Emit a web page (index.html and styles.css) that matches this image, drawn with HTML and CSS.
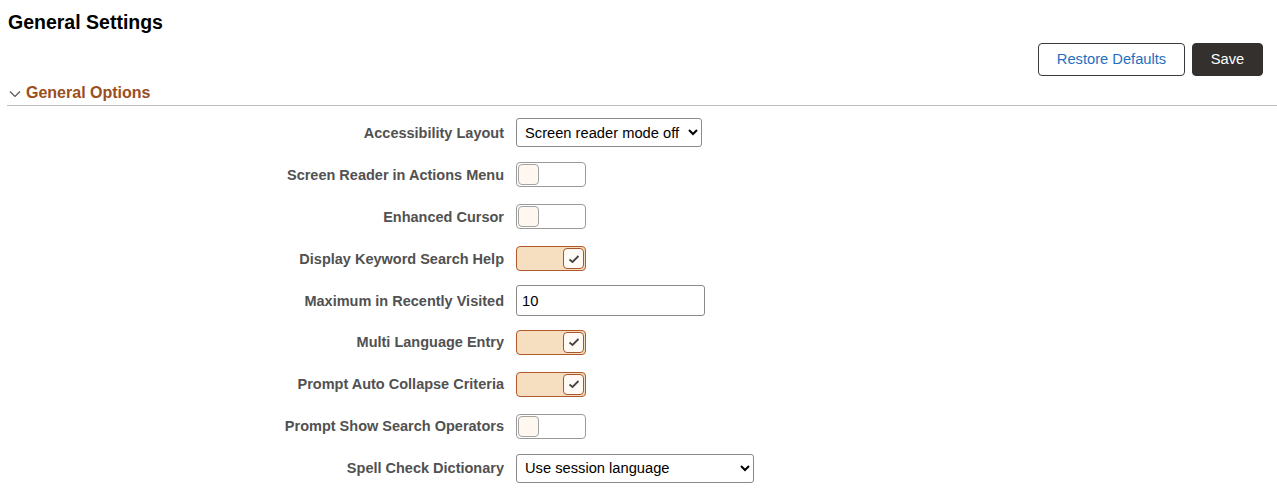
FILE: index.html
```html
<!DOCTYPE html>
<html lang="en">
<head>
<meta charset="utf-8">
<title>General Settings</title>
<link rel="stylesheet" href="styles.css">
</head>
<body>
<div class="page">
  <h1 class="title">General Settings</h1>
  <div class="toolbar">
    <button class="btn btn-secondary">Restore Defaults</button>
    <button class="btn btn-primary">Save</button>
  </div>
  <div class="section-header">
    <svg class="chev" width="12" height="8" viewBox="0 0 12 8"><polyline points="1,1.5 6,6.5 11,1.5" fill="none" stroke="#555" stroke-width="1.2"/></svg>
    <span>General Options</span>
  </div>
  <div class="form">
    <label class="lbl">Accessibility Layout</label>
    <div class="ctl"><select class="sel sel-a"><option>Screen reader mode off</option></select></div>

    <label class="lbl">Screen Reader in Actions Menu</label>
    <div class="ctl"><span class="toggle"><span class="knob"></span></span></div>

    <label class="lbl">Enhanced Cursor</label>
    <div class="ctl"><span class="toggle"><span class="knob"></span></span></div>

    <label class="lbl">Display Keyword Search Help</label>
    <div class="ctl"><span class="toggle on"><span class="knob"><svg width="12" height="10" viewBox="0 0 12 10"><polyline points="1.5,5.5 4.5,8 10.5,2" fill="none" stroke="#444" stroke-width="1.8"/></svg></span></span></div>

    <label class="lbl">Maximum in Recently Visited</label>
    <div class="ctl"><input class="txt" type="text" value="10"></div>

    <label class="lbl">Multi Language Entry</label>
    <div class="ctl"><span class="toggle on"><span class="knob"><svg width="12" height="10" viewBox="0 0 12 10"><polyline points="1.5,5.5 4.5,8 10.5,2" fill="none" stroke="#444" stroke-width="1.8"/></svg></span></span></div>

    <label class="lbl">Prompt Auto Collapse Criteria</label>
    <div class="ctl"><span class="toggle on"><span class="knob"><svg width="12" height="10" viewBox="0 0 12 10"><polyline points="1.5,5.5 4.5,8 10.5,2" fill="none" stroke="#444" stroke-width="1.8"/></svg></span></span></div>

    <label class="lbl">Prompt Show Search Operators</label>
    <div class="ctl"><span class="toggle"><span class="knob"></span></span></div>

    <label class="lbl">Spell Check Dictionary</label>
    <div class="ctl"><select class="sel sel-b"><option>Use session language</option></select></div>
  </div>
</div>
</body>
</html>
```
FILE: styles.css
```css
* { box-sizing: border-box; }
html, body { margin: 0; padding: 0; background: #fff; }
body { font-family: "Liberation Sans", Arial, sans-serif; color: #333; }
.page { padding: 0 0 0 8px; }
.title {
  margin: 0;
  padding-top: 12px;
  font-size: 19.5px;
  line-height: 20px;
  font-weight: bold;
  color: #000;
}
.toolbar {
  display: flex;
  justify-content: flex-end;
  gap: 7px;
  margin-top: 11px;
  padding-right: 14px;
}
.btn {
  font-family: "Liberation Sans", Arial, sans-serif;
  font-size: 14.7px;
  height: 33px;
  border-radius: 4px;
  padding: 0 0 2px;
  cursor: pointer;
}
.btn-secondary {
  background: #fff;
  border: 1px solid #3a3a3a;
  color: #1f6fbf;
  width: 147px;
}
.btn-primary {
  background: #33302e;
  border: 1px solid #33302e;
  color: #fff;
  width: 71px;
}
.section-header {
  display: flex;
  align-items: center;
  gap: 5px;
  margin-left: -1px;
  padding: 7px 0 3px 2px;
  height: 30px;
  border-bottom: 1px solid #bdbdbd;
  font-size: 16px;
  line-height: 18px;
  font-weight: bold;
  color: #9b4e21;
}
.chev { margin-top: 2px; }
.form {
  display: grid;
  grid-template-columns: 496px 1fr;
  grid-auto-rows: 41.9px;
  column-gap: 12px;
  padding-top: 6px;
}
.lbl {
  display: flex;
  align-items: center;
  justify-content: flex-end;
  font-size: 14.5px;
  font-weight: bold;
  color: #515151;
}
.ctl {
  display: flex;
  align-items: center;
}
.sel {
  height: 29px;
  font-family: "Liberation Sans", Arial, sans-serif;
  font-size: 14.7px;
  color: #000;
  border: 1px solid #8a8a8a;
  border-radius: 3px;
  background: #fff;
  padding: 0 4px;
}
.sel-a { width: 186px; }
.sel-b { width: 238px; }
.txt {
  width: 189px;
  height: 31px;
  border: 1px solid #8a8a8a;
  border-radius: 3px;
  font-family: "Liberation Sans", Arial, sans-serif;
  font-size: 14.7px;
  color: #000;
  padding: 0 5px;
}
.toggle {
  display: flex;
  align-items: center;
  width: 70px;
  height: 25px;
  border: 1px solid #9a9a9a;
  border-radius: 4px;
  background: #fff;
  padding: 0 1px;
}
.knob {
  display: flex;
  align-items: center;
  justify-content: center;
  width: 21px;
  height: 21px;
  border: 1px solid #a3a3a3;
  border-radius: 4px;
  background: #fff8f1;
}
.toggle.on {
  background: #f6dfc0;
  border-color: #b0592b;
  justify-content: flex-end;
}
.toggle.on .knob {
  background: #fffaf5;
  border-color: #ab552a;
}
```
